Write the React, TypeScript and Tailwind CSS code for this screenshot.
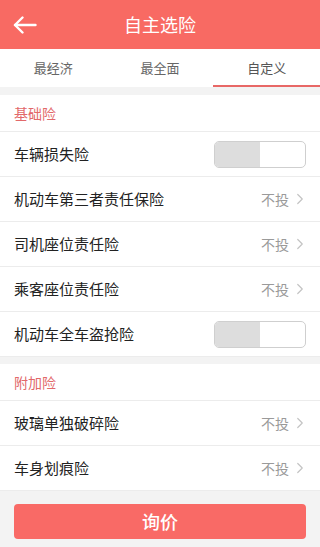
import { ChevronRight } from 'lucide-react';

const font = { fontFamily: '"Noto Sans CJK SC", "Noto Sans", sans-serif' };

function Toggle() {
  return (
    <div className="flex h-[27px] w-[92px] overflow-hidden rounded-[5px] border border-[#cfcfcf] bg-white">
      <div className="w-1/2 bg-[#dddddd]" />
      <div className="w-1/2" />
    </div>
  );
}

function Row({ label, toggle }: { label: string; toggle?: boolean }) {
  return (
    <div className="flex h-[45px] items-center justify-between border-b border-[#ececec] bg-white pl-[14px] pr-[14px]">
      <span className="text-[15px] text-[#222]">{label}</span>
      {toggle ? (
        <Toggle />
      ) : (
        <div className="flex items-center gap-[2px]">
          <span className="text-[14px] text-[#9a9a9a]">不投</span>
          <ChevronRight className="-mr-[3px] h-[18px] w-[18px] text-[#c4c4c4]" strokeWidth={1.6} />
        </div>
      )}
    </div>
  );
}

function SectionTitle({ title }: { title: string }) {
  return (
    <div className="flex h-[37px] items-center border-b border-[#ececec] bg-white pl-[14px]">
      <span className="text-[14px] text-[#e2686a]">{title}</span>
    </div>
  );
}

export default function App() {
  return (
    <div className="flex h-[547px] w-[320px] flex-col overflow-hidden bg-[#f3f3f3]" style={font}>
      {/* Header */}
      <div className="relative flex h-[49px] items-center justify-center bg-[#f86a63]">
        <svg
          className="absolute left-[13px] top-[16px]"
          width="24"
          height="18"
          viewBox="0 0 24 18"
          fill="none"
          stroke="white"
          strokeWidth="2.4"
          strokeLinecap="round"
          strokeLinejoin="round"
        >
          <path d="M22.5 9H2" />
          <path d="M9.5 1.5L2 9l7.5 7.5" />
        </svg>
        <span className="text-[18px] text-white">自主选险</span>
      </div>

      {/* Tabs */}
      <div className="grid h-[38px] grid-cols-3 bg-white">
        <div className="flex items-center justify-center text-[13px] text-[#666]">最经济</div>
        <div className="flex items-center justify-center text-[13px] text-[#666]">最全面</div>
        <div className="flex items-center justify-center border-b-2 border-[#e86866] pt-[2px] text-[13px] text-[#555]">
          自定义
        </div>
      </div>

      <div className="h-[8px]" />

      <SectionTitle title="基础险" />
      <Row label="车辆损失险" toggle />
      <Row label="机动车第三者责任保险" />
      <Row label="司机座位责任险" />
      <Row label="乘客座位责任险" />
      <Row label="机动车全车盗抢险" toggle />

      <div className="h-[7px]" />

      <SectionTitle title="附加险" />
      <Row label="玻璃单独破碎险" />
      <Row label="车身划痕险" />

      <div className="px-[14px] pt-[13px]">
        <button className="flex h-[35px] w-full items-center justify-center rounded-[4px] bg-[#f96a66] text-[18px] font-medium text-white">
          询价
        </button>
      </div>
    </div>
  );
}
